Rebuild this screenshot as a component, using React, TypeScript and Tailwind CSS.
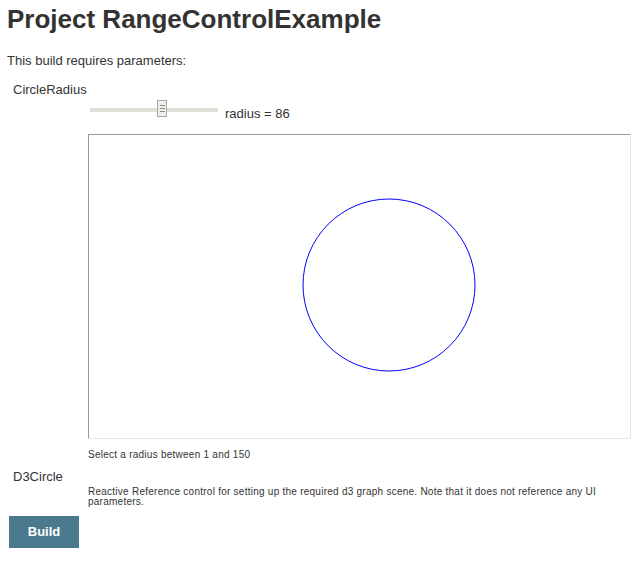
export default function App() {
  return (
    <div className="min-h-[566px] w-[637px] bg-white font-['Liberation_Sans',Arial,sans-serif] text-[#333]">
      <div className="px-[7px] pt-[5px]">
        <h1 className="text-[26px] leading-[29px] font-bold">Project RangeControlExample</h1>
        <p className="mt-[19px] text-[13px] leading-[16px]">This build requires parameters:</p>
      </div>

      {/* CircleRadius */}
      <div className="mt-[13px] pl-[13px] text-[13px] leading-[16px]">CircleRadius</div>
      <div className="ml-[88px] mt-[2px] w-[543px]">
        <div className="flex items-end gap-[7px]">
          <div className="relative h-[20px] w-[130px]">
            <div className="absolute top-[8px] left-[2px] h-[4px] w-[128px] bg-[#e2ded8]" />
            <div className="absolute top-0 left-[69px] flex h-[17px] w-[10px] flex-col items-center justify-center gap-[2px] border border-[#a8a8a8] bg-[#f1efeb]">
              <span className="block h-px w-[5px] bg-[#8a8a8a]" />
              <span className="block h-px w-[5px] bg-[#8a8a8a]" />
              <span className="block h-px w-[5px] bg-[#8a8a8a]" />
            </div>
          </div>
          <span className="mb-[-2px] text-[13px] leading-[16px]">radius = 86</span>
        </div>
        <div className="mt-[14px] h-[305px] w-[543px] overflow-hidden border border-t-[#999] border-l-[#999] border-r-[#e8e8e8] border-b-[#e8e8e8]">
          <svg width="600" height="300">
            <circle cx="300" cy="150" r="86" fill="none" stroke="#0000ff" strokeWidth="1" />
          </svg>
        </div>
        <p className="mt-[10px] text-[10px] leading-[12px] tracking-[0.25px] text-[#333]">
          Select a radius between 1 and 150
        </p>
      </div>

      {/* D3Circle */}
      <div className="mt-[8px] pl-[13px] text-[13px] leading-[16px]">D3Circle</div>
      <div className="ml-[88px] mt-[2px] w-[543px]">
        <p className="text-[10px] leading-[10px] tracking-[0.25px]">
          Reactive Reference control for setting up the required d3 graph scene. Note that it does not reference any UI
          parameters.
        </p>
      </div>

      <div className="mt-[9px] pl-[9px]">
        <button type="button" className="h-[32px] w-[70px] bg-[#4b7a8e] text-[13px] font-bold text-white">
          Build
        </button>
      </div>
    </div>
  )
}
